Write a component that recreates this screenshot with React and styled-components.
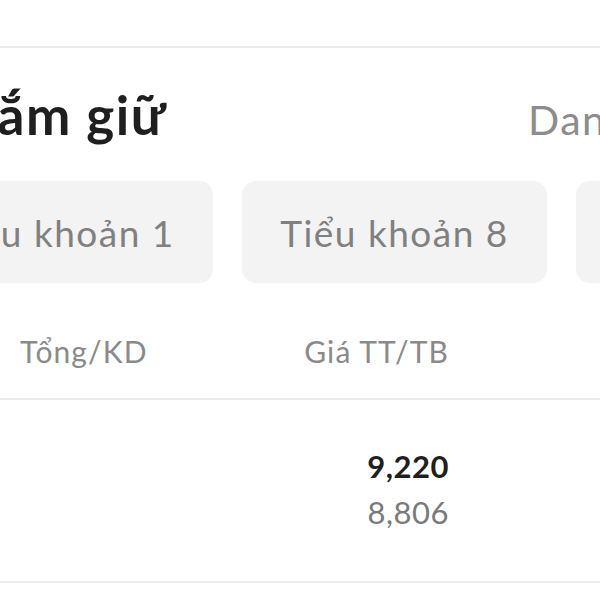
import styled, { createGlobalStyle } from "styled-components";

const Global = createGlobalStyle`
  html, body {
    margin: 0;
    padding: 0;
    background: #fff;
  }
  body {
    font-family: Lato, "Noto Sans", sans-serif;
  }
`;

const Page = styled.div`
  width: 600px;
  height: 600px;
  overflow: hidden;
  background: #fff;
`;

const TopBar = styled.div`
  height: 46px;
  border-bottom: 2px solid #ececec;
`;

const HeadRow = styled.div`
  display: flex;
  align-items: baseline;
  padding-top: 40px;
  white-space: nowrap;
`;

const TitleWrap = styled.div`
  width: 167px;
  display: flex;
  justify-content: flex-end;
  flex-shrink: 0;
`;

const Title = styled.h2`
  margin: 0;
  font-size: 53px;
  line-height: 1;
  font-weight: 700;
  color: #1f1f1f;
  letter-spacing: 1.5px;
  flex-shrink: 0;
`;

const Action = styled.span`
  margin-left: 361px;
  font-size: 41px;
  line-height: 1;
  color: #8c8c8c;
  letter-spacing: 1.5px;
  flex-shrink: 0;
`;

const ChipRow = styled.div`
  display: flex;
  gap: 29px;
  padding-top: 40px;
  margin-left: -92px;
`;

const Chip = styled.div`
  flex: 0 0 305px;
  height: 102px;
  border-radius: 14px;
  background: #f3f3f3;
  display: flex;
  align-items: center;
  justify-content: center;
  font-size: 37px;
  color: #808080;
  letter-spacing: 1.5px;
  white-space: nowrap;
`;

const Grid = styled.div`
  display: grid;
  grid-template-columns: 160px 289px 1fr;
  border-bottom: 2px solid #ececec;
`;

const HeadGrid = styled(Grid)`
  padding: 53px 0 32px;
`;

const BodyGrid = styled(Grid)`
  padding: 43px 0 46px;
`;

const HeadCell = styled.div`
  font-size: 30px;
  line-height: 1;
  color: #8a8a8a;
  letter-spacing: 1.1px;
  white-space: nowrap;
  text-align: ${(p) => (p.$right ? "right" : "left")};
  padding-left: ${(p) => (p.$right ? "0" : "20px")};
`;

const Cell = styled.div`
  display: flex;
  flex-direction: column;
  align-items: flex-end;
`;

const Value = styled.span`
  font-size: 31px;
  line-height: 46px;
  font-weight: ${(p) => (p.$strong ? 700 : 400)};
  color: ${(p) => (p.$strong ? "#1f1f1f" : "#7a7a7a")};
  letter-spacing: 0.5px;
`;

const accounts = ["Tiểu khoản 1", "Tiểu khoản 8", "Tiểu khoản 9"];

export default function App() {
  return (
    <Page>
      <Global />
      <TopBar />
      <HeadRow>
        <TitleWrap>
          <Title>Danh mục nắm giữ</Title>
        </TitleWrap>
        <Action>Danh sách</Action>
      </HeadRow>
      <ChipRow>
        {accounts.map((a) => (
          <Chip key={a}>{a}</Chip>
        ))}
      </ChipRow>
      <HeadGrid>
        <HeadCell>Tổng/KD</HeadCell>
        <HeadCell $right>Giá TT/TB</HeadCell>
        <div />
      </HeadGrid>
      <BodyGrid>
        <div />
        <Cell>
          <Value $strong>9,220</Value>
          <Value>8,806</Value>
        </Cell>
        <div />
      </BodyGrid>
    </Page>
  );
}
